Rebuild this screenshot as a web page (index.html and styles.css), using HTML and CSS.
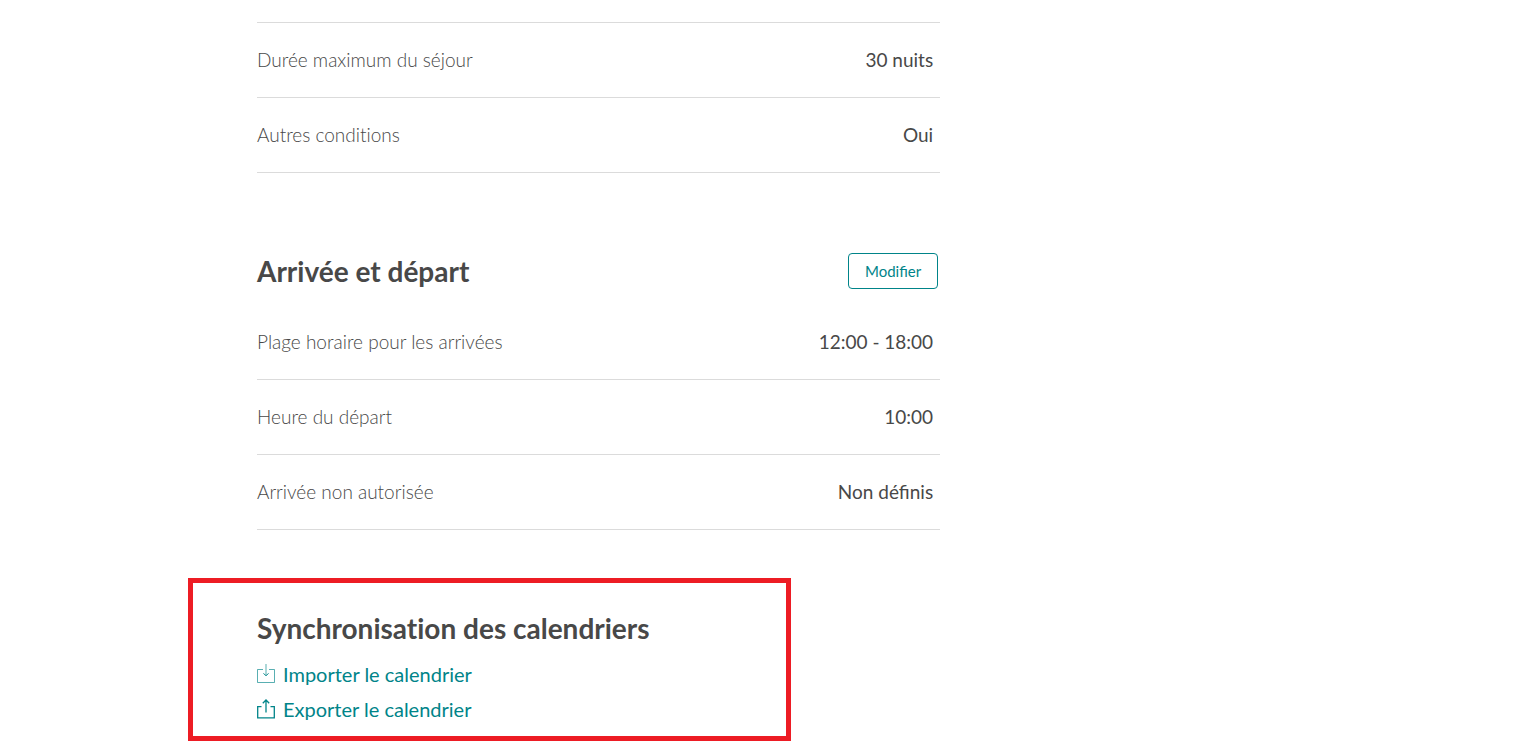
FILE: index.html
```html
<!DOCTYPE html>
<html lang="fr">
<head>
<meta charset="utf-8">
<title>Paramètres de disponibilité</title>
<link rel="stylesheet" href="styles.css">
</head>
<body>
<main class="settings">
  <section class="group">
    <dl class="rows rows-first">
      <div class="row"><dt>Durée maximum du séjour</dt><dd>30 nuits</dd></div>
      <div class="row"><dt>Autres conditions</dt><dd>Oui</dd></div>
    </dl>
  </section>
  <section class="group group-last">
    <header class="group-head">
      <h2>Arrivée et départ</h2>
      <button class="edit" type="button">Modifier</button>
    </header>
    <dl class="rows">
      <div class="row"><dt>Plage horaire pour les arrivées</dt><dd>12:00 - 18:00</dd></div>
      <div class="row"><dt>Heure du départ</dt><dd>10:00</dd></div>
      <div class="row"><dt>Arrivée non autorisée</dt><dd>Non définis</dd></div>
    </dl>
  </section>
  <section class="sync">
    <h2>Synchronisation des calendriers</h2>
    <nav class="sync-links">
      <a class="sync-link" href="#import">
        <svg class="icon" viewBox="0 0 18 20" aria-hidden="true"><path opacity=".65" d="M6 5.500H.5v13h17v-13H12M9 0v11.500"/><path d="M6.500 9.300 9 11.800l2.500-2.500"/></svg>
        <span>Importer le calendrier</span>
      </a>
      <a class="sync-link" href="#export">
        <svg class="icon" viewBox="0 0 18 20" aria-hidden="true"><path stroke-width="1.300" d="M4.500 7.600H.7v11.200h16.600V7.600H13.500M9 13.500V1M5.800 4.200 9 1l3.200 3.200"/></svg>
        <span>Exporter le calendrier</span>
      </a>
    </nav>
  </section>
</main>
</body>
</html>
```
FILE: styles.css
```css
* {
  box-sizing: border-box;
}

body {
  margin: 0;
  background: #fff;
  color: #484848;
  font-family: Lato, "Open Sans", sans-serif;
  font-size: 19px;
  line-height: 24px;
}

.settings {
  width: 49%;
  min-width: 640px;
  margin-left: 188px;
  padding-top: 22px;
}

.group {
  margin-left: 69px;
  margin-bottom: 80px;
}

.group-last {
  margin-bottom: 48px;
}

.rows {
  margin: 0;
}

.rows-first {
  border-top: 1px solid #dbdbdb;
}

.row {
  display: flex;
  justify-content: space-between;
  align-items: center;
  min-height: 75px;
  padding-right: 7px;
  border-bottom: 1px solid #dbdbdb;
}

dt {
  font-weight: 300;
  font-variant-ligatures: no-common-ligatures;
}

dd {
  margin: 0;
}

h2 {
  margin: 0;
  font-size: 28px;
  line-height: 36px;
  font-weight: 700;
  font-variant-ligatures: no-common-ligatures;
}

.group-head {
  display: flex;
  justify-content: space-between;
  align-items: center;
  padding-right: 2px;
  margin-bottom: 16px;
}

.edit {
  height: 36px;
  padding: 0 16px;
  border: 1px solid #008489;
  border-radius: 4px;
  background: #fff;
  color: #008489;
  font: 400 15px Lato, sans-serif;
}

.sync {
  max-width: 603px;
  padding: 27px 64px 10px;
  border: 5px solid #ed1c24;
}

.sync-links {
  margin-top: 10px;
}

.sync-link {
  display: flex;
  align-items: center;
  gap: 8px;
  min-height: 35px;
  color: #008489;
  font-size: 20px;
  text-decoration: none;
}

.icon {
  width: 18px;
  height: 20px;
  fill: none;
  stroke: currentColor;
}
```
